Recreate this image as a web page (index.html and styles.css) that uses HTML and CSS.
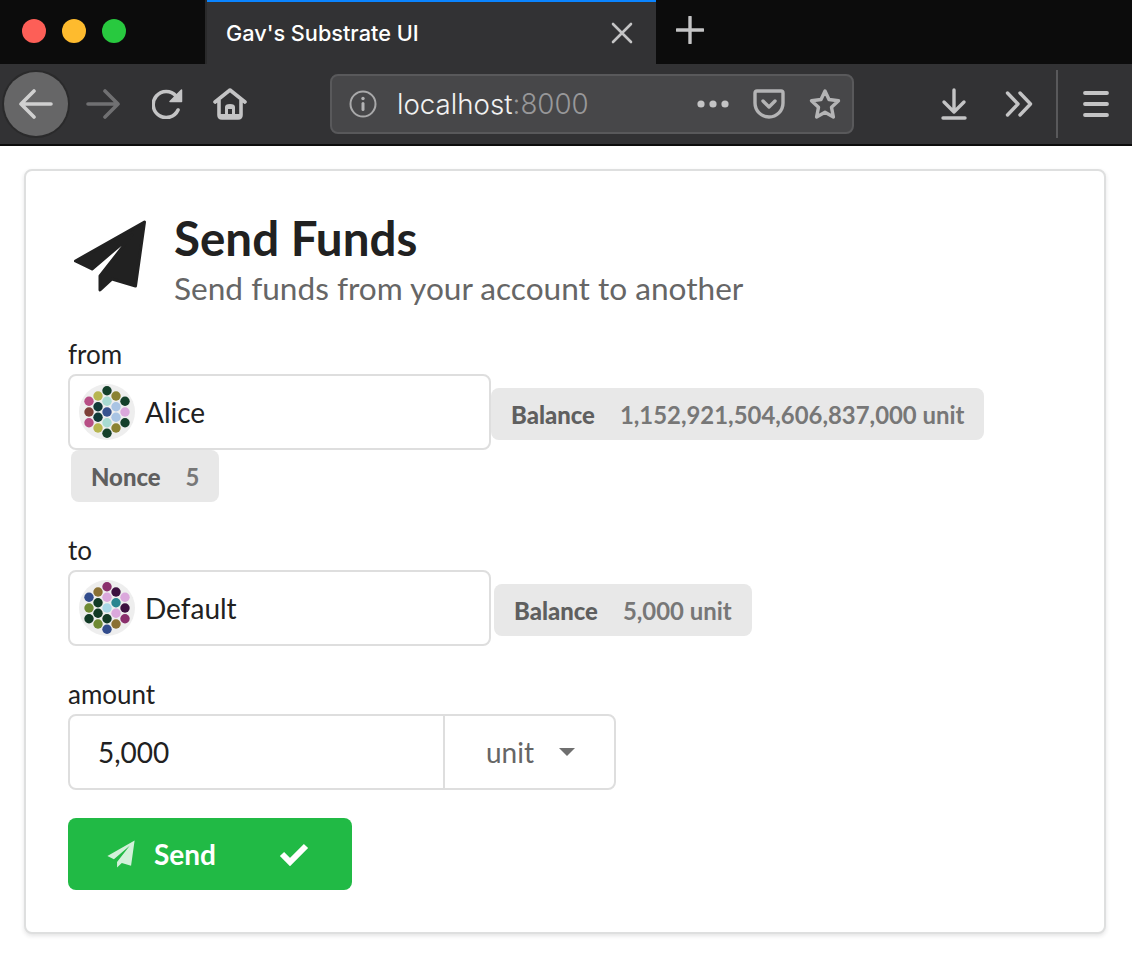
FILE: index.html
```html
<!DOCTYPE html>
<html lang="en">
<head>
<meta charset="utf-8">
<title>Gav's Substrate UI</title>
<link rel="stylesheet" href="styles.css">
</head>
<body>
<header class="chrome">
  <div class="tabstrip">
    <div class="lights"><span class="light red"></span><span class="light yellow"></span><span class="light green"></span></div>
    <div class="tab">
      <span class="tab-title">Gav's Substrate UI</span>
      <svg class="tab-close" width="24" height="24" viewBox="0 0 24 24"><path d="M3 3 21 21M21 3 3 21" stroke="#c4c4c5" stroke-width="2.6" stroke-linecap="round"/></svg>
    </div>
    <svg class="tab-new" width="28" height="28" viewBox="0 0 28 28"><path d="M14 1V27M1 14H27" stroke="#c4c4c5" stroke-width="3.4" stroke-linecap="round"/></svg>
  </div>
  <div class="toolbar">
    <div class="back"><svg width="34" height="30" viewBox="0 0 34 30"><path d="M15 2 2 15 15 28M2 15H32" fill="none" stroke="#d0d0d0" stroke-width="3.6" stroke-linecap="round" stroke-linejoin="round"/></svg></div>
    <div class="tool forward"><svg width="34" height="30" viewBox="0 0 34 30"><path d="M19 2 32 15 19 28M32 15H2" fill="none" stroke="#707072" stroke-width="3.6" stroke-linecap="round" stroke-linejoin="round"/></svg></div>
    <div class="tool reload"><svg width="32" height="30" viewBox="0 0 32 30"><path d="M26 21A13 13 0 1 1 24 7" fill="none" stroke="#c4c4c5" stroke-width="3.6" stroke-linecap="round"/><path d="M29.5 1V12.500H18Z" fill="#c4c4c5" stroke="#c4c4c5" stroke-width="1.500" stroke-linejoin="round"/></svg></div>
    <div class="tool home"><svg width="34" height="32" viewBox="0 0 34 32"><path d="M2 14 17 2 32 14M6 12V27Q6 30 9 30H25Q28 30 28 27V12" fill="none" stroke="#c4c4c5" stroke-width="3.6" stroke-linecap="round" stroke-linejoin="round"/><path d="M12 28V19Q12 16 17 16 22 16 22 19V28H19V21H15V28Z" fill="#c4c4c5"/><path d="M6 28H28" stroke="#c4c4c5" stroke-width="4"/></svg></div>
    <div class="urlbar">
      <svg class="url-info" width="28" height="28" viewBox="0 0 28 28"><circle cx="14" cy="14" r="12.500" fill="none" stroke="#a9a9aa" stroke-width="2"/><rect x="12.500" y="12" width="3" height="9" rx="1.500" fill="#b4b4b5"/><circle cx="14" cy="8.500" r="1.700" fill="#b4b4b5"/></svg>
      <span class="url-text">localhost<span class="url-port">:8000</span></span>
      <svg class="url-dots" width="32" height="8" viewBox="0 0 32 8"><circle cx="4" cy="4" r="3.600" fill="#c4c4c5"/><circle cx="16" cy="4" r="3.600" fill="#c4c4c5"/><circle cx="28" cy="4" r="3.600" fill="#c4c4c5"/></svg>
      <svg class="url-pocket" width="32" height="30" viewBox="0 0 32 30"><path d="M4 2H28Q30 2 30 4V14A14 14 0 0 1 2 14V4Q2 2 4 2Z" fill="none" stroke="#b4b4b5" stroke-width="3.400" stroke-linejoin="round"/><path d="M10 12 16 18 22 12" fill="none" stroke="#b4b4b5" stroke-width="3.400" stroke-linecap="round" stroke-linejoin="round"/></svg>
      <svg class="url-star" width="32" height="32" viewBox="0 0 32 32"><path d="M16 3 20 11.500 29.500 12.700 22.500 19.300 24.400 29 16 24.200 7.600 29 9.500 19.300 2.500 12.700 12 11.500Z" fill="none" stroke="#b4b4b5" stroke-width="3.400" stroke-linejoin="round"/></svg>
    </div>
    <div class="tool download"><svg width="26" height="32" viewBox="0 0 26 32"><path d="M13 2V23M3 14 13 24 23 14" fill="none" stroke="#c4c4c5" stroke-width="3.400" stroke-linecap="round" stroke-linejoin="round"/><path d="M2 30H24" stroke="#c4c4c5" stroke-width="3.400" stroke-linecap="round"/></svg></div>
    <div class="tool overflow"><svg width="28" height="26" viewBox="0 0 28 26"><path d="M2.500 2 13 13 2.500 24M15 2 25.500 13 15 24" fill="none" stroke="#c4c4c5" stroke-width="3.400" stroke-linecap="round" stroke-linejoin="round"/></svg></div>
    <div class="separator"></div>
    <div class="tool menu"><svg width="26" height="26" viewBox="0 0 26 26"><path d="M2 2H24M2 13H24M2 24H24" stroke="#c4c4c5" stroke-width="3.800" stroke-linecap="round"/></svg></div>
  </div>
</header>

<main class="card">
  <div class="heading">
    <svg class="heading-icon" width="78" height="76" viewBox="0 0 78 76"><path d="M73.500 4 64.500 68 41 61 29 72V58L61 17 21 51 4.500 43Z" fill="#212121" stroke="#212121" stroke-width="3" stroke-linejoin="round"/></svg>
    <div class="heading-text">
      <h2 class="title">Send Funds</h2>
      <p class="subtitle">Send funds from your account to another</p>
    </div>
  </div>

  <form class="form">
    <div class="field field-from">
      <label class="field-label">from</label>
      <div class="row">
        <div class="account">
          <svg class="identicon" width="56" height="56" viewBox="0 0 56 56">
            <circle cx="28" cy="28" r="28" fill="#eeeeee"/>
            <circle cx="28" cy="6.700" r="4.700" fill="#14402a"/><circle cx="19" cy="12" r="4.700" fill="#b7b64f"/><circle cx="37" cy="12" r="4.700" fill="#8a8232"/>
            <circle cx="10" cy="17.300" r="4.700" fill="#b84f86"/><circle cx="28" cy="17.300" r="4.700" fill="#a8dbd2"/><circle cx="46" cy="17.300" r="4.700" fill="#14402a"/>
            <circle cx="19" cy="22.700" r="4.700" fill="#113a38"/><circle cx="37" cy="22.700" r="4.700" fill="#a9c4e4"/>
            <circle cx="10" cy="28" r="4.700" fill="#7d4038"/><circle cx="28" cy="28" r="4.700" fill="#38528f"/><circle cx="46" cy="28" r="4.700" fill="#dba8dc"/>
            <circle cx="19" cy="33.300" r="4.700" fill="#113a38"/><circle cx="37" cy="33.300" r="4.700" fill="#a9c4e4"/>
            <circle cx="10" cy="38.700" r="4.700" fill="#b84f86"/><circle cx="28" cy="38.700" r="4.700" fill="#a8dbd2"/><circle cx="46" cy="38.700" r="4.700" fill="#14402a"/>
            <circle cx="19" cy="44" r="4.700" fill="#b7b64f"/><circle cx="37" cy="44" r="4.700" fill="#8a8232"/><circle cx="28" cy="49.300" r="4.700" fill="#14402a"/>
          </svg>
          <span class="account-name">Alice</span>
        </div>
        <span class="tag"><b class="tag-key">Balance</b><span class="tag-val">1,152,921,504,606,837,000 unit</span></span>
        <span class="tag tag-spaced tag-flush"><b class="tag-key">Nonce</b><span class="tag-val">5</span></span>
      </div>
    </div>

    <div class="field field-to">
      <label class="field-label">to</label>
      <div class="row">
        <div class="account">
          <svg class="identicon" width="56" height="56" viewBox="0 0 56 56">
            <circle cx="28" cy="28" r="28" fill="#eeeeee"/>
            <circle cx="28" cy="6.700" r="4.700" fill="#8a2f6c"/><circle cx="19" cy="12" r="4.700" fill="#8a7033"/><circle cx="37" cy="12" r="4.700" fill="#3d1040"/>
            <circle cx="10" cy="17.300" r="4.700" fill="#324c8c"/><circle cx="28" cy="17.300" r="4.700" fill="#dba8dc"/><circle cx="46" cy="17.300" r="4.700" fill="#dba8dc"/>
            <circle cx="19" cy="22.700" r="4.700" fill="#123a25"/><circle cx="37" cy="22.700" r="4.700" fill="#2a8590"/>
            <circle cx="10" cy="28" r="4.700" fill="#6f8a33"/><circle cx="28" cy="28" r="4.700" fill="#a8d8e8"/><circle cx="46" cy="28" r="4.700" fill="#3d1040"/>
            <circle cx="19" cy="33.300" r="4.700" fill="#123a25"/><circle cx="37" cy="33.300" r="4.700" fill="#dba8dc"/>
            <circle cx="10" cy="38.700" r="4.700" fill="#123a25"/><circle cx="28" cy="38.700" r="4.700" fill="#123a25"/><circle cx="46" cy="38.700" r="4.700" fill="#8a2f6c"/>
            <circle cx="19" cy="44" r="4.700" fill="#6f8a33"/><circle cx="37" cy="44" r="4.700" fill="#8a7033"/><circle cx="28" cy="49.300" r="4.700" fill="#324c8c"/>
          </svg>
          <span class="account-name">Default</span>
        </div>
        <span class="tag tag-spaced"><b class="tag-key">Balance</b><span class="tag-val">5,000 unit</span></span>
      </div>
    </div>

    <div class="field field-amount">
      <label class="field-label">amount</label>
      <div class="amount">
        <span class="amount-value">5,000</span>
        <span class="amount-unit">unit<span class="caret"></span></span>
      </div>
    </div>

    <button class="send" type="button">
      <svg class="send-plane" width="32" height="30" viewBox="0 0 78 76"><path d="M73.500 4 64.500 68 41 61 29 72V58L61 17 21 51 4.500 43Z" fill="#fff" fill-opacity=".8"/></svg>
      <span class="send-label">Send</span>
      <svg class="send-check" width="30" height="24" viewBox="0 0 30 24"><path d="M3 12 11 20 27 4" fill="none" stroke="#fff" stroke-width="6"/></svg>
    </button>
  </form>
</main>
</body>
</html>
```
FILE: styles.css
```css
* { box-sizing: border-box; }
html, body { margin: 0; padding: 0; background: #fff; }
body { font-family: Lato, "Liberation Sans", sans-serif; color: #212121; height: 958px; overflow: hidden; }

.chrome { height: 146px; background: #0c0c0c; font-family: Inter, "Noto Sans", sans-serif; }
.tabstrip { height: 64px; display: flex; align-items: stretch; }
.lights { width: 207px; display: flex; align-items: center; gap: 16px; padding: 0 0 2px 22px; border-right: 2px solid #2a2a2b; }
.light { width: 24px; height: 24px; border-radius: 50%; }
.red { background: #fd5f57; }
.yellow { background: #febb2e; }
.green { background: #28c93f; }
.tab { width: 449px; background: #323234; border-top: 2px solid #0a84ff; display: flex; align-items: center; padding: 0 22px 0 19px; color: #fff; }
.tab-title { flex: 1; font-size: 21.700px; font-weight: 500; }
.tab-new { align-self: center; margin: 0 0 4px 20px; }

.toolbar { height: 80px; background: #323234; display: flex; align-items: center; padding-left: 4px; }
.back { width: 64px; height: 64px; border-radius: 50%; background: #666667; box-shadow: 0 0 0 2px #2a2a2b; display: flex; align-items: center; justify-content: center; }
.tool { display: flex; align-items: center; justify-content: center; height: 64px; }
.forward { width: 70px; }
.reload { width: 58px; padding-left: 2px; }
.home { width: 68px; }
.urlbar { margin-left: 66px; width: 524px; height: 60px; background: #474749; border: 2px solid #59595b; border-radius: 8px; display: flex; align-items: center; padding-left: 17px; }
.url-text { margin-left: 20px; flex: 1; font-size: 27.700px; color: #f2f2f2; font-weight: 300; }
.url-port { color: #98989a; }
.url-dots { margin-right: 24px; }
.url-pocket { margin-right: 24px; }
.url-star { margin-right: 11px; }
.download { margin-left: 70px; width: 60px; }
.overflow { width: 70px; }
.separator { width: 2px; height: 68px; background: #59595b; margin: 0 2px; }
.menu { width: 72px; }

.card { margin: 23px 26px 0 24px; height: 765px; border: 2px solid #dedfdf; border-radius: 8px; box-shadow: 0 2px 4px rgba(34, 36, 38, .12); padding: 41px 42px 40px; background: #fff; }

.heading { display: flex; align-items: flex-start; gap: 25px; }
.heading-icon { margin: 6px 0 0 3px; flex: none; }
.title { margin: 0; font-size: 47.500px; line-height: 52px; font-weight: 700; color: #212121; }
.subtitle { margin: 4px 0 0; font-size: 31.600px; line-height: 40px; color: #666; }

.form { margin-top: 30px; }
.field-label { display: block; font-size: 26px; line-height: 32px; height: 36px; color: #212121; }
.field-to { margin-top: 32px; }
.field-amount { margin-top: 32px; }
.row { display: flex; flex-wrap: wrap; align-items: center; width: 996px; }
.account { width: 423px; height: 76px; border: 2px solid #dedede; border-radius: 8px; display: flex; align-items: center; padding-left: 9px; }
.identicon { flex: none; }
.account-name { margin-left: 10px; font-size: 28px; }
.tag { height: 52px; margin-top: 4px; background: #e8e8e8; border-radius: 8px; display: inline-flex; align-items: center; padding: 0 20px; font-size: 23.900px; color: #777; font-weight: 700; }
.tag-spaced { margin-left: 3px; }
.tag-flush { margin-top: 0; }
.tag-key { color: #5f5f5f; margin-right: 25px; }

.amount { display: flex; width: 548px; height: 76px; border: 2px solid #dedede; border-radius: 8px; font-size: 28px; }
.amount-value { width: 375px; padding-left: 28px; display: flex; align-items: center; border-right: 2px solid #dedede; }
.amount-unit { flex: 1; padding-left: 41px; display: flex; align-items: center; color: #666; }
.caret { width: 0; height: 0; border-left: 8px solid transparent; border-right: 8px solid transparent; border-top: 8px solid #6f6f6f; margin-left: 25px; }

.send { margin-top: 28px; width: 284px; height: 72px; border: 0; border-radius: 8px; background: #21ba45; color: #fff; font-family: inherit; font-size: 28px; font-weight: 700; display: flex; align-items: center; padding: 0 0 0 37px; }
.send-label { margin-left: 17px; }
.send-check { margin-left: 63px; }
```
